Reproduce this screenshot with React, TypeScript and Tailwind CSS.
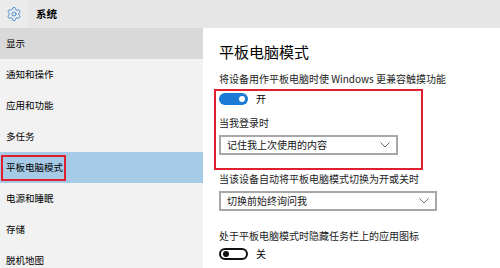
import { Settings } from 'lucide-react';

const navItems = ['显示', '通知和操作', '应用和功能', '多任务', '平板电脑模式', '电源和睡眠', '存储', '脱机地图'];

// 下拉箭头
const Chevron = () => (
  <svg width="10" height="6" viewBox="0 0 10 6" className="shrink-0">
    <polyline points="0.5,0.5 5,5 9.5,0.5" fill="none" stroke="#6b6b6b" strokeWidth="1" />
  </svg>
);

const Toggle = ({ on }: { on: boolean }) =>
  on ? (
    <div className="w-[29px] h-[12px] rounded-full bg-[#1a7ad4] flex items-center justify-end pr-[3px]">
      <div className="w-[6px] h-[6px] rounded-full bg-white" />
    </div>
  ) : (
    <div className="w-[29px] h-[12px] rounded-full border-2 border-[#111] flex items-center pl-[2px]">
      <div className="w-[6px] h-[6px] rounded-full bg-[#111]" />
    </div>
  );

const Dropdown = ({ text, width }: { text: string; width: string }) => (
  <div className={`${width} h-[20px] border-2 border-[#a8a8a8] bg-white flex items-center justify-between pl-[6px] pr-[6px] text-[10px] leading-none text-[#111]`}>
    <span>{text}</span>
    <Chevron />
  </div>
);

export default function App() {
  return (
    <div
      className="w-[500px] h-[268px] overflow-hidden flex flex-col bg-[#f2f2f2] text-black"
      style={{ fontFamily: '"Noto Sans CJK SC", "Noto Sans", sans-serif' }}
    >
      {/* 顶部标题栏 */}
      <div className="h-[28px] shrink-0 flex items-center bg-[#e6e6e6]">
        <div className="w-[28px] h-[28px] flex items-center justify-center bg-[#ebebeb]">
          <Settings size={16} strokeWidth={1.4} color="#3d8ad6" />
        </div>
        <span className="ml-[8px] text-[10.5px] font-bold leading-none">系统</span>
      </div>

      <div className="flex flex-1 min-h-0">
        {/* 左侧导航 */}
        <div className="w-[203px] shrink-0 flex flex-col">
          {navItems.map((item, i) => (
            <div
              key={item}
              className={`relative h-[31px] shrink-0 flex items-center pl-[6px] text-[9.5px] leading-none ${
                i === 0 ? 'bg-[#d9d9d9]' : i === 4 ? 'bg-[#a6cbe7]' : ''
              }`}
            >
              {item}
              {i === 4 && (
                <div className="absolute left-[1px] top-[3px] w-[65px] h-[26px] border-2 border-[#e0202e]" />
              )}
            </div>
          ))}
        </div>

        {/* 右侧内容 */}
        <div className="relative flex-1 bg-white pl-[16px] pt-[14px] flex flex-col">
          <div className="h-[20px] text-[15px] leading-[20px]">平板电脑模式</div>
          <div className="mt-[10px] h-[14px] text-[10px] leading-[14px] text-[#222]">
            将设备用作平板电脑时使 Windows 更兼容触摸功能
          </div>
          <div className="mt-[6px] h-[14px] flex items-center gap-[8px] text-[10px] leading-none">
            <Toggle on />
            <span>开</span>
          </div>
          <div className="mt-[10px] h-[14px] text-[10px] leading-[14px] text-[#222]">当我登录时</div>
          <div className="mt-[5px]">
            <Dropdown text="记住我上次使用的内容" width="w-[179px]" />
          </div>
          <div className="mt-[17px] h-[14px] text-[10px] leading-[14px] text-[#222]">
            当该设备自动将平板电脑模式切换为开或关时
          </div>
          <div className="mt-[5px]">
            <Dropdown text="切换前始终询问我" width="w-[218px]" />
          </div>
          <div className="mt-[18px] h-[14px] text-[10px] leading-[14px] text-[#222]">
            处于平板电脑模式时隐藏任务栏上的应用图标
          </div>
          <div className="mt-[4px] h-[14px] flex items-center gap-[8px] text-[10px] leading-none">
            <Toggle on={false} />
            <span>关</span>
          </div>

          {/* 红色标注框 */}
          <div className="absolute left-[11px] top-[61px] w-[209px] h-[81px] border-2 border-[#e0202e]" />
        </div>
      </div>
    </div>
  );
}
